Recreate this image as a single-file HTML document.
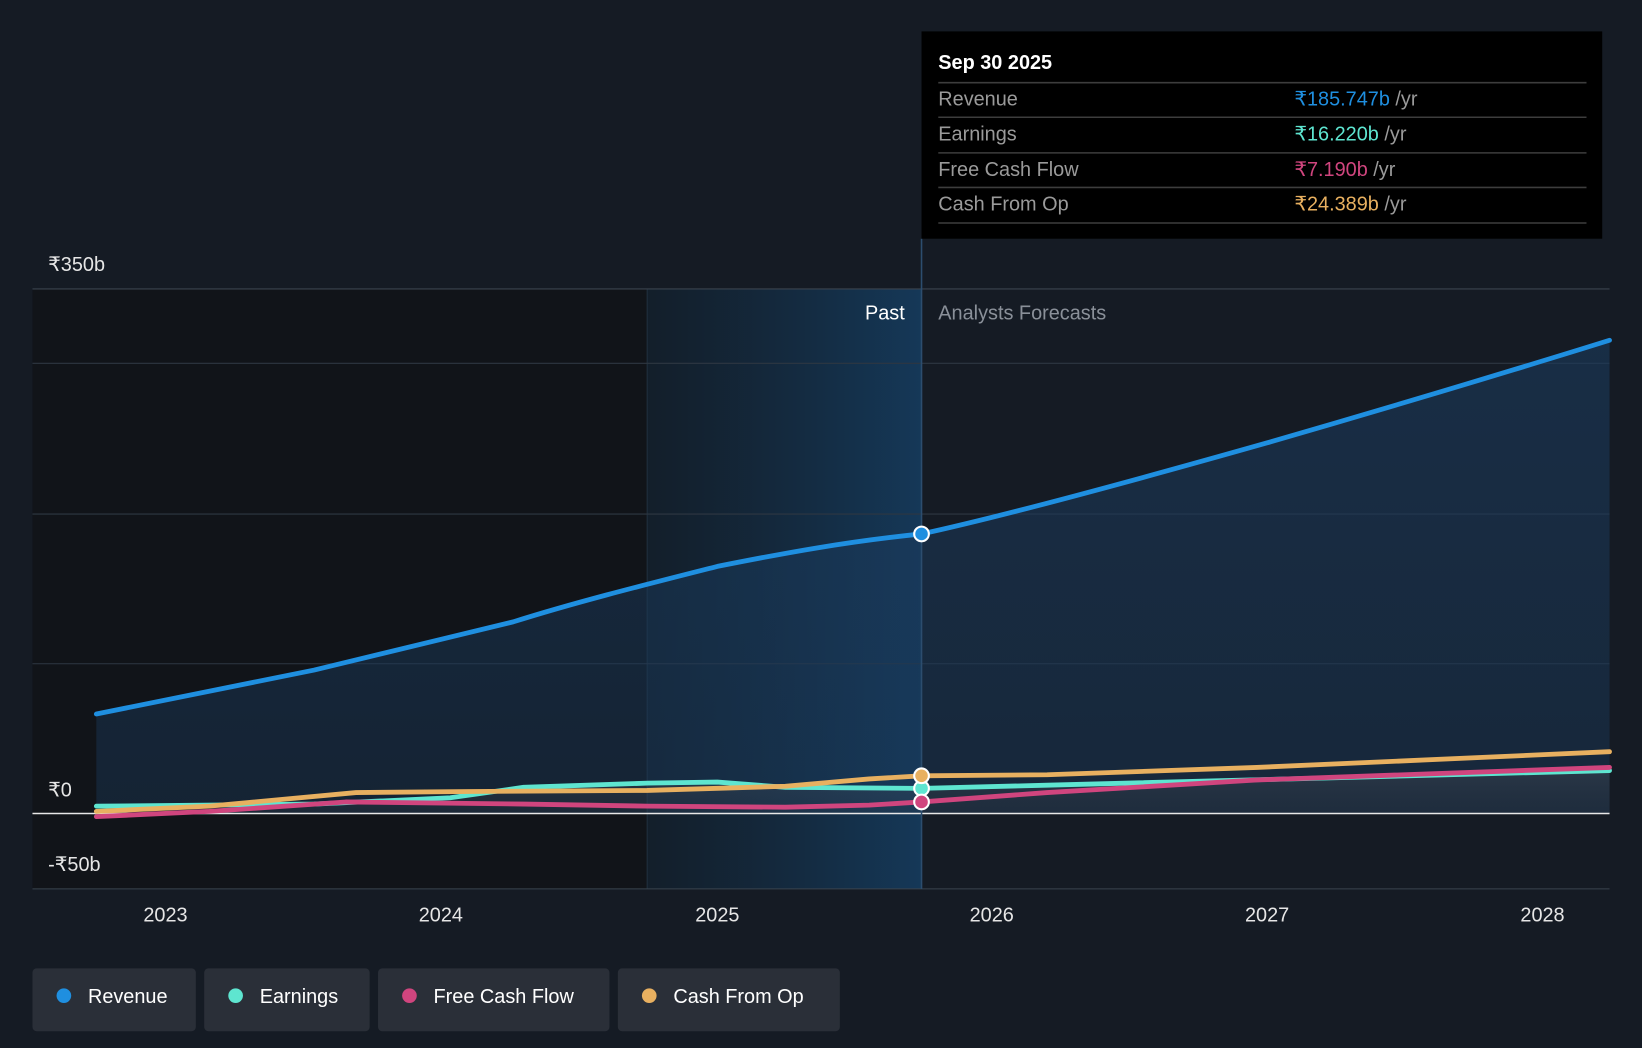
<!DOCTYPE html>
<html><head><meta charset="utf-8"><style>
html,body{margin:0;padding:0;background:#151b24;}
svg{display:block;font-family:"Liberation Sans",sans-serif;}
</style></head><body>
<svg width="1642" height="1048" viewBox="0 0 1568 1001" preserveAspectRatio="none" xmlns="http://www.w3.org/2000/svg">
<defs>
<linearGradient id="hl" x1="0" x2="1" y1="0" y2="0">
<stop offset="0" stop-color="#12202d" stop-opacity="0.7"/>
<stop offset="1" stop-color="#153858"/>
</linearGradient>
<linearGradient id="rf" x1="0" x2="0" y1="0" y2="1">
<stop offset="0" stop-color="#1a3a5c" stop-opacity="0.6"/>
<stop offset="1" stop-color="#1a3a5c" stop-opacity="0.4"/>
</linearGradient>
<linearGradient id="gf" x1="0" x2="0" y1="0" y2="1">
<stop offset="0" stop-color="#555a62" stop-opacity="0.6"/>
<stop offset="1" stop-color="#3a3e46" stop-opacity="0.4"/>
</linearGradient>
</defs>
<rect width="1568" height="1001" fill="#151b24"/>
<rect x="31" y="276" width="587" height="573" fill="#111419"/>
<rect x="618" y="276" width="262" height="573" fill="url(#hl)"/>
<line x1="618" y1="276" x2="618" y2="849" stroke="#22303e" stroke-width="1"/>
<g stroke="#2e3742" stroke-width="1">
<line x1="31" y1="276" x2="1537" y2="276" stroke="#3a434e"/>
<line x1="31" y1="347" x2="1537" y2="347"/>
<line x1="31" y1="491" x2="1537" y2="491"/>
<line x1="31" y1="634" x2="1537" y2="634"/>
<line x1="31" y1="849" x2="1537" y2="849" stroke="#3a434e"/>
</g>
<path d="M92,682 C160,668 230,654 300,640 C350,628 420,611 490,594 C550,575 618,558 685,541 C750,528 810,517 880,510 C940,497 1030,474 1210,423 C1400,368 1537,325 1537,325 L1537,777 L92,777 Z" fill="url(#rf)"/>
<path d="M92,770 L300,768 430,762 500,752 618,748 685,747 750,752 880,753 1000,750 1537,736 L1537,777 L92,777Z" fill="url(#gf)" opacity="0.5"/>
<line x1="31" y1="777" x2="1537" y2="777" stroke="#e8e8e8" stroke-width="1.5"/>
<line x1="880" y1="228" x2="880" y2="849" stroke="#2c4d6e" stroke-width="1.5"/>
<g fill="none" stroke-width="4.6" stroke-linecap="round" stroke-linejoin="round">
<path d="M92,770 L300,768 430,762 500,752 618,748 685,747 750,752 880,753 1000,750 1537,736" stroke="#5ee5d0"/>
<path d="M92,780 L200,775 330,766 500,768 618,770 750,771 830,769 880,766 1000,757 1200,745 1537,733" stroke="#d0457e"/>
<path d="M92,775 L200,770 340,757 450,756 618,755 750,751 830,744 880,741 1000,740 1200,733 1537,718" stroke="#e8b060"/>
<path d="M92,682 C160,668 230,654 300,640 C350,628 420,611 490,594 C550,575 618,558 685,541 C750,528 810,517 880,510 C940,497 1030,474 1210,423 C1400,368 1537,325 1537,325" stroke="#1f8fe0"/>
</g>
<g stroke="#fff" stroke-width="2">
<circle cx="880" cy="510" r="7" fill="#1f8fe0"/>
<circle cx="880" cy="753" r="7" fill="#5ee5d0"/>
<circle cx="880" cy="741" r="7" fill="#e8b060"/>
<circle cx="880" cy="766" r="7" fill="#d0457e"/>
</g>
<g fill="#e6e6e6" font-size="19">
<text x="46" y="259">₹350b</text>
<text x="46" y="761">₹0</text>
<text x="46" y="832">-₹50b</text>
</g>
<text x="864" y="305" fill="#fff" font-size="19" text-anchor="end">Past</text>
<text x="896" y="305" fill="#8a9099" font-size="19">Analysts Forecasts</text>
<g fill="#e6e6e6" font-size="19" text-anchor="middle">
<text x="158" y="880">2023</text>
<text x="421" y="880">2024</text>
<text x="685" y="880">2025</text>
<text x="947" y="880">2026</text>
<text x="1210" y="880">2027</text>
<text x="1473" y="880">2028</text>
</g>
<rect x="880" y="30" width="650" height="198" fill="#000"/>
<text x="896" y="66" fill="#fff" font-size="19" font-weight="bold">Sep 30 2025</text>
<g stroke="#3d3d3d" stroke-width="1.5">
<line x1="896" y1="79" x2="1515" y2="79"/>
<line x1="896" y1="112" x2="1515" y2="112"/>
<line x1="896" y1="146" x2="1515" y2="146"/>
<line x1="896" y1="179" x2="1515" y2="179"/>
<line x1="896" y1="213" x2="1515" y2="213"/>
</g>
<g font-size="19" fill="#9a9a9a">
<text x="896" y="101">Revenue</text>
<text x="896" y="134">Earnings</text>
<text x="896" y="168">Free Cash Flow</text>
<text x="896" y="201">Cash From Op</text>
<text x="1236" y="101"><tspan fill="#1f8fe0">₹185.747b</tspan> /yr</text>
<text x="1236" y="134"><tspan fill="#5ee5d0">₹16.220b</tspan> /yr</text>
<text x="1236" y="168"><tspan fill="#d0457e">₹7.190b</tspan> /yr</text>
<text x="1236" y="201"><tspan fill="#e8b060">₹24.389b</tspan> /yr</text>
</g>
<g font-size="19" fill="#fff">
<rect x="31" y="925" width="156" height="60" rx="4" fill="#2a2f38"/>
<circle cx="61" cy="951" r="7" fill="#1f8fe0"/><text x="84" y="958">Revenue</text>
<rect x="195" y="925" width="158" height="60" rx="4" fill="#2a2f38"/>
<circle cx="225" cy="951" r="7" fill="#5ee5d0"/><text x="248" y="958">Earnings</text>
<rect x="361" y="925" width="221" height="60" rx="4" fill="#2a2f38"/>
<circle cx="391" cy="951" r="7" fill="#d0457e"/><text x="414" y="958">Free Cash Flow</text>
<rect x="590" y="925" width="212" height="60" rx="4" fill="#2a2f38"/>
<circle cx="620" cy="951" r="7" fill="#e8b060"/><text x="643" y="958">Cash From Op</text>
</g>
</svg>
</body></html>
